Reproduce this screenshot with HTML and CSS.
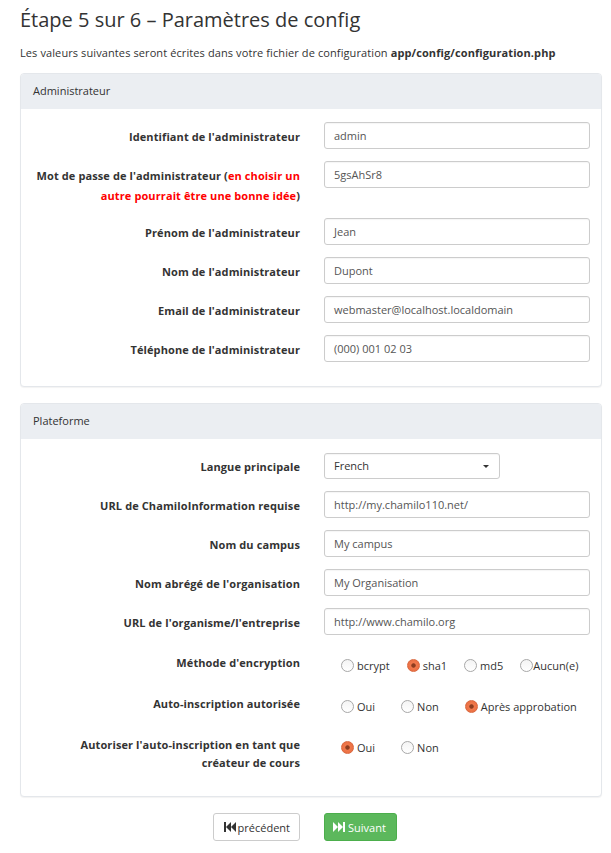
FILE: index.html
```html
<!DOCTYPE html>
<html lang="fr">
<head>
<meta charset="utf-8">
<title>Étape 5 sur 6</title>
<link rel="stylesheet" href="styles.css">
</head>
<body>
<div class="page">
  <h1 class="title">Étape 5 sur 6 – Paramètres de config</h1>
  <p class="intro">Les valeurs suivantes seront écrites dans votre fichier de configuration <b>app/config/configuration.php</b></p>

  <section class="panel">
    <div class="panel-heading">Administrateur</div>
    <div class="panel-body">
      <div class="row"><label class="lbl">Identifiant de l'administrateur</label><div class="ctl"><div class="input">admin</div></div></div>
      <div class="row"><label class="lbl">Mot de passe de l'administrateur (<span class="warn">en choisir un autre pourrait être une bonne idée</span>)</label><div class="ctl"><div class="input">5gsAhSr8</div></div></div>
      <div class="row"><label class="lbl">Prénom de l'administrateur</label><div class="ctl"><div class="input">Jean</div></div></div>
      <div class="row"><label class="lbl">Nom de l'administrateur</label><div class="ctl"><div class="input">Dupont</div></div></div>
      <div class="row"><label class="lbl">Email de l'administrateur</label><div class="ctl"><div class="input">webmaster@localhost.localdomain</div></div></div>
      <div class="row"><label class="lbl">Téléphone de l'administrateur</label><div class="ctl"><div class="input">(000) 001 02 03</div></div></div>
    </div>
  </section>

  <section class="panel">
    <div class="panel-heading">Plateforme</div>
    <div class="panel-body">
      <div class="row"><label class="lbl">Langue principale</label><div class="ctl"><div class="input select">French<span class="caret"></span></div></div></div>
      <div class="row"><label class="lbl">URL de ChamiloInformation requise</label><div class="ctl"><div class="input">http://my.chamilo110.net/</div></div></div>
      <div class="row"><label class="lbl">Nom du campus</label><div class="ctl"><div class="input">My campus</div></div></div>
      <div class="row"><label class="lbl">Nom abrégé de l'organisation</label><div class="ctl"><div class="input">My Organisation</div></div></div>
      <div class="row"><label class="lbl">URL de l'organisme/l'entreprise</label><div class="ctl"><div class="input">http://www.chamilo.org</div></div></div>
      <div class="row"><label class="lbl lbl-r">Méthode d'encryption</label>
        <div class="radios tight">
          <span class="opt"><span class="radio"></span><span class="txt">bcrypt</span></span>
          <span class="opt"><span class="radio on"></span><span class="txt">sha1</span></span>
          <span class="opt"><span class="radio"></span><span class="txt">md5</span></span>
          <span class="opt"><span class="radio"></span><span class="txt flush">Aucun(e)</span></span>
        </div>
      </div>
      <div class="row"><label class="lbl lbl-r">Auto-inscription autorisée</label>
        <div class="radios wide">
          <span class="opt"><span class="radio"></span><span class="txt">Oui</span></span>
          <span class="opt"><span class="radio"></span><span class="txt">Non</span></span>
          <span class="opt"><span class="radio on"></span><span class="txt">Après approbation</span></span>
        </div>
      </div>
      <div class="row"><label class="lbl lbl-r">Autoriser l'auto-inscription en tant que créateur de cours</label>
        <div class="radios wide">
          <span class="opt"><span class="radio on"></span><span class="txt">Oui</span></span>
          <span class="opt"><span class="radio"></span><span class="txt">Non</span></span>
        </div>
      </div>
    </div>
  </section>

  <div class="actions">
    <button class="btn btn-default"><svg class="ico" viewBox="0 0 12 10" width="12" height="10"><rect x="0" y="0" width="2" height="10"/><polygon points="2,5 7,0 7,10"/><polygon points="7,5 12,0 12,10"/></svg>précédent</button>
    <button class="btn btn-success"><svg class="ico" viewBox="0 0 12 10" width="12" height="10"><polygon points="0,0 5,5 0,10"/><polygon points="5,0 10,5 5,10"/><rect x="10" y="0" width="2" height="10"/></svg>Suivant</button>
  </div>
</div>
</body>
</html>
```

FILE: styles.css
```css
* { box-sizing: border-box; }
html, body { margin: 0; padding: 0; background: #fff; }
body {
  font-family: "Open Sans", "Noto Sans", "Liberation Sans", sans-serif;
  font-size: 11px;
  color: #333;
}
.page { padding: 0 9px 0 20px; }
.title {
  margin: 8px 0 0;
  font-size: 20px;
  line-height: 24px;
  font-weight: 400;
  color: #333;
}
.intro {
  margin: 11px 0 10px;
  line-height: 20px;
  letter-spacing: 0.1px;
}
.intro b { font-weight: 700; }

.panel {
  border: 1px solid #e4e7eb;
  border-radius: 4px;
  background: #fff;
  box-shadow: 0 1px 1px rgba(0,0,0,0.05);
  margin-bottom: 16px;
}
.panel-heading {
  background: #ebeef2;
  height: 35px;
  line-height: 34px;
  padding: 0 12px;
  border-radius: 3px 3px 0 0;
}
.panel-body { padding: 13px 11px 12px 15px; }

.row {
  display: grid;
  grid-template-columns: 264px 266px;
  column-gap: 24px;
  margin-bottom: 12px;
}
.lbl {
  text-align: right;
  font-weight: 700;
  line-height: 20px;
  padding-top: 5px;
  letter-spacing: 0.1px;
}
.lbl-r {
  line-height: 18px;
  padding-top: 7px;
}
.warn { color: #f00; }
.input {
  height: 27px;
  line-height: 25px;
  border: 1px solid #ccc;
  border-radius: 3px;
  padding: 0 9px;
  color: #555;
  background: #fff;
  box-shadow: inset 0 1px 1px rgba(0,0,0,0.04);
}
.select {
  width: 176px;
  height: 26px;
  line-height: 24px;
  margin-top: 1px;
  display: flex;
  align-items: center;
  justify-content: space-between;
  padding-right: 10px;
  color: #333;
}
.caret {
  width: 0; height: 0;
  border-left: 3px solid transparent;
  border-right: 3px solid transparent;
  border-top: 3px solid #333;
}

.radios {
  display: flex;
  align-items: center;
  height: 29px;
  padding: 8px 0 0 17px;
  line-height: 20px;
  align-self: start;
}
.radios.tight { gap: 17px; }
.radios.wide { gap: 26px; }
.opt { display: inline-flex; align-items: center; }
.radio {
  width: 13px; height: 13px;
  border-radius: 50%;
  border: 1px solid #a8a8a8;
  background: linear-gradient(#f4f4f4, #fff);
  display: inline-block;
}
.radio.on {
  border-color: #d9683f;
  background: radial-gradient(circle, #8e3d20 0 1.8px, #f0794c 2.6px, #e86a3e 100%);
}
.txt { margin-left: 3px; }
.txt.flush { margin-left: 0; }

.actions {
  display: grid;
  grid-template-columns: 264px 266px;
  column-gap: 24px;
  padding-left: 16px;
  margin-top: 3px;
}
.btn {
  font-family: inherit;
  font-size: 11px;
  height: 28px;
  border-radius: 3px;
  display: inline-flex;
  align-items: center;
  cursor: pointer;
}
.btn-default {
  justify-self: end;
  background: #fff;
  border: 1px solid #ccc;
  color: #333;
  padding: 0 9px 0 10px;
}
.btn-success {
  justify-self: start;
  background: #5cb85c;
  border: 1px solid #4cae4c;
  color: #fff;
  padding: 0 10px 0 8px;
}
.ico { fill: currentColor; margin-right: 2px; }
.btn-success .ico { margin-right: 3px; }
```
